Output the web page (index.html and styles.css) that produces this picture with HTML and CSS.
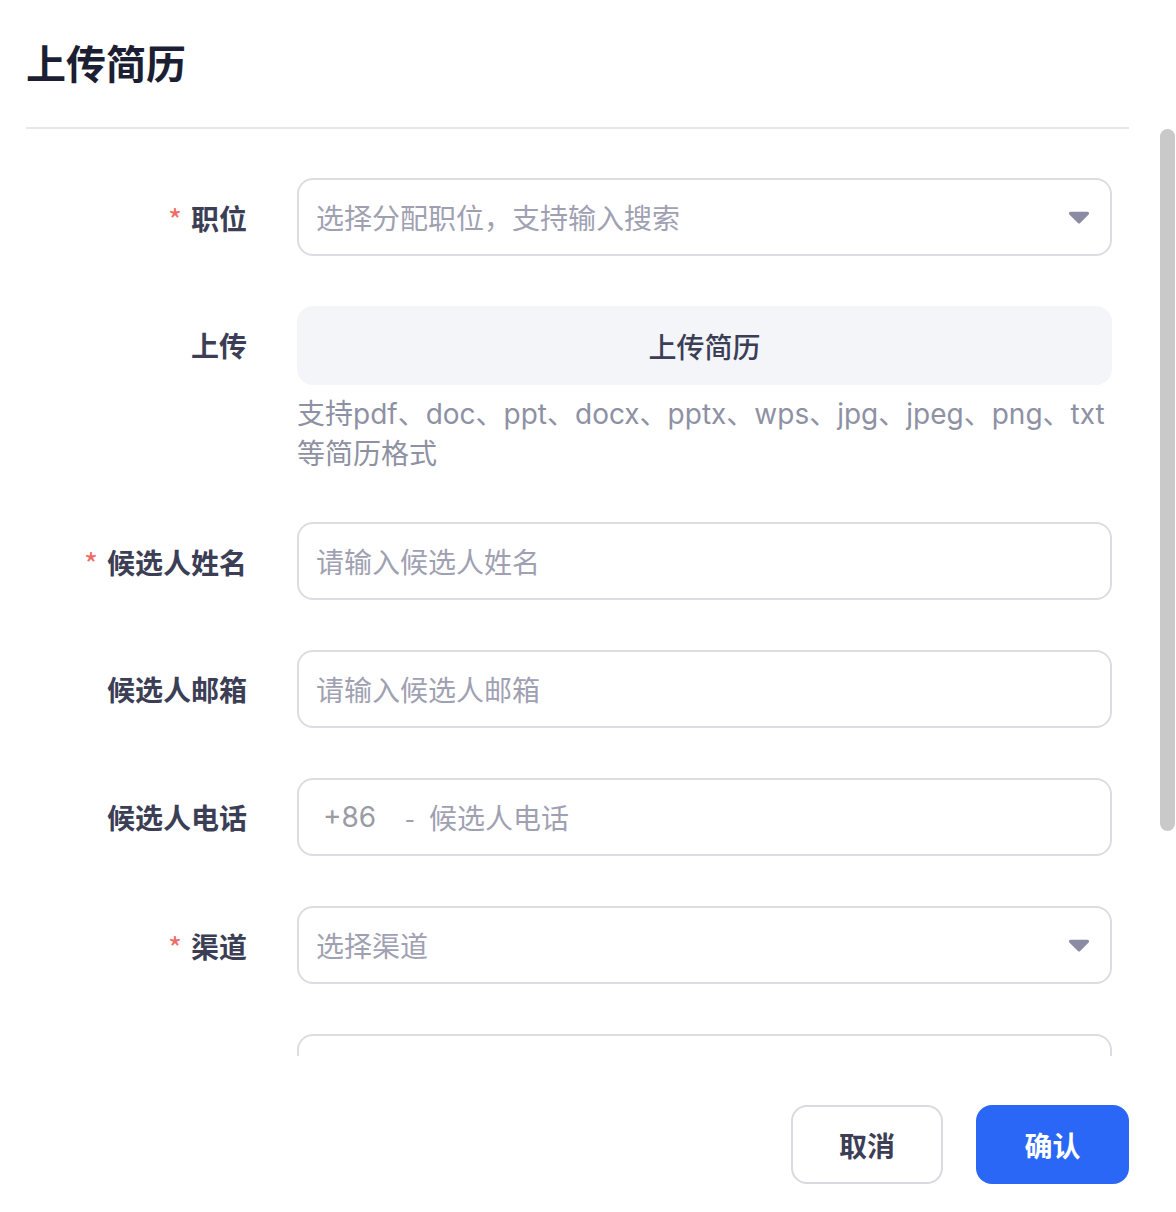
FILE: index.html
```html
<!DOCTYPE html>
<html lang="zh-CN">
<head>
<meta charset="utf-8">
<title>上传简历</title>
<link rel="stylesheet" href="styles.css">
</head>
<body>
<div class="dialog">
  <div class="header">
    <h1 class="title">上传简历</h1>
  </div>
  <div class="body">
    <div class="scroll">
      <div class="form">
        <div class="label"><span class="req">*</span>职位</div>
        <div class="field select">
          <span class="ph">选择分配职位，支持输入搜索</span>
          <svg class="arrow" width="22" height="13" viewBox="0 0 22 13"><path d="M2.6 0.8h16.8a1.6 1.6 0 0 1 1.2 2.7l-8.4 8.4a1.6 1.6 0 0 1-2.3 0L1.4 3.5A1.6 1.6 0 0 1 2.6 0.8z"/></svg>
        </div>

        <div class="label">上传</div>
        <div class="upload-col">
          <div class="upload-btn">上传简历</div>
          <p class="hint">支持pdf、doc、ppt、docx、pptx、wps、jpg、jpeg、png、txt等简历格式</p>
        </div>

        <div class="label"><span class="req">*</span>候选人姓名</div>
        <div class="field"><span class="ph">请输入候选人姓名</span></div>

        <div class="label">候选人邮箱</div>
        <div class="field"><span class="ph">请输入候选人邮箱</span></div>

        <div class="label">候选人电话</div>
        <div class="field phone"><span class="prefix">+86</span><span class="ph dash">- 候选人电话</span></div>

        <div class="label"><span class="req">*</span>渠道</div>
        <div class="field select">
          <span class="ph">选择渠道</span>
          <svg class="arrow" width="22" height="13" viewBox="0 0 22 13"><path d="M2.6 0.8h16.8a1.6 1.6 0 0 1 1.2 2.7l-8.4 8.4a1.6 1.6 0 0 1-2.3 0L1.4 3.5A1.6 1.6 0 0 1 2.6 0.8z"/></svg>
        </div>

        <div class="label"></div>
        <div class="field"></div>
      </div>
    </div>
    <div class="track"><div class="thumb"></div></div>
  </div>
  <div class="footer">
    <button class="btn cancel">取消</button>
    <button class="btn ok">确认</button>
  </div>

  <div class="watermark" aria-hidden="true">
    <span class="wm">石头 2023-10-23 15:23<br>6804436893</span>
    <span class="wm">石头 2023-10-23 15:23<br>6804436893</span>
    <span class="wm">石头 2023-10-23 15:23<br>6804436893</span>
    <span class="wm">石头 2023-10-23 15:23<br>6804436893</span>
    <span class="wm">石头 2023-10-23 15:23<br>6804436893</span>
    <span class="wm">石头 2023-10-23 15:23<br>6804436893</span>
    <span class="wm">石头 2023-10-23 15:23<br>6804436893</span>
    <span class="wm">石头 2023-10-23 15:23<br>6804436893</span>
    <span class="wm">石头 2023-10-23 15:23<br>6804436893</span>
    <span class="wm">石头 2023-10-23 15:23<br>6804436893</span>
    <span class="wm">石头 2023-10-23 15:23<br>6804436893</span>
    <span class="wm">石头 2023-10-23 15:23<br>6804436893</span>
    <span class="wm">石头 2023-10-23 15:23<br>6804436893</span>
    <span class="wm">石头 2023-10-23 15:23<br>6804436893</span>
    <span class="wm">石头 2023-10-23 15:23<br>6804436893</span>
    <span class="wm">石头 2023-10-23 15:23<br>6804436893</span>
    <span class="wm">石头 2023-10-23 15:23<br>6804436893</span>
    <span class="wm">石头 2023-10-23 15:23<br>6804436893</span>
  </div>
</div>
</body>
</html>
```

FILE: styles.css
```css
* { box-sizing: border-box; }
html, body {
  margin: 0;
  padding: 0;
  background: #ffffff;
}
body {
  font-family: Inter, "Noto Sans CJK SC", sans-serif;
  color: #3b3e55;
  width: 1176px;
  height: 1212px;
  overflow: hidden;
}
.dialog {
  position: relative;
  width: 1176px;
  height: 1212px;
  overflow: hidden;
}
.header {
  margin: 0 47px 0 26px;
  height: 129px;
  padding-top: 34px;
  border-bottom: 2px solid #e6e7ec;
}
.title {
  margin: 0;
  font-family: "Noto Sans CJK SC", sans-serif;
  font-size: 40px;
  line-height: 56px;
  font-weight: 700;
  color: #1c1f33;
}
.body {
  display: flex;
  height: 927px;
}
.scroll {
  flex: 0 0 1112px;
  overflow: hidden;
  padding: 49px 0 0 26px;
}
.form {
  display: grid;
  grid-template-columns: 221px 815px;
  column-gap: 50px;
  row-gap: 50px;
  align-items: start;
}
.label {
  height: 78px;
  line-height: 78px;
  text-align: right;
  font-family: "Noto Sans CJK SC", sans-serif;
  font-size: 28px;
  font-weight: 700;
  color: #3b3e55;
  white-space: nowrap;
}
.req {
  color: #ee6b66;
  font-family: "Noto Sans CJK SC", sans-serif;
  font-weight: 400;
  font-size: 30px;
  margin-right: 9px;
  position: relative;
  top: 2px;
}
.field {
  height: 78px;
  border: 2px solid #dcdde3;
  border-radius: 16px;
  display: flex;
  align-items: center;
  padding: 0 20px 0 17px;
  font-family: "Noto Sans CJK SC", sans-serif;
  font-size: 28px;
  background: #fff;
}
.ph {
  color: #9fa1b2;
  flex: 1;
  white-space: nowrap;
}
.arrow {
  fill: #8a8ca3;
  flex: none;
}
.phone { padding-left: 24px; }
.prefix {
  font-family: Inter, "Noto Sans CJK SC", sans-serif;
  color: #9a9ba4;
  width: 82px;
  flex: none;
}
.dash { word-spacing: 8px; }
.upload-col {
  display: flex;
  flex-direction: column;
}
.upload-btn {
  height: 79px;
  border-radius: 16px;
  background: #f4f5f9;
  display: flex;
  align-items: center;
  justify-content: center;
  font-family: "Noto Sans CJK SC", sans-serif;
  font-size: 28px;
  font-weight: 500;
  color: #3b3e55;
}
.hint {
  margin: 9px 0 -2px 0;
  font-size: 28px;
  line-height: 40px;
  color: #8e91a3;
}
.track {
  margin-left: 48px;
  width: 15px;
}
.thumb {
  width: 15px;
  height: 702px;
  border-radius: 8px;
  background: #c9c9c9;
}
.footer {
  display: flex;
  justify-content: flex-end;
  gap: 33px;
  margin-right: 47px;
  padding-top: 49px;
}
.btn {
  height: 79px;
  border-radius: 16px;
  font-family: "Noto Sans CJK SC", sans-serif;
  font-size: 28px;
  font-weight: 700;
  cursor: pointer;
  padding: 0;
}
.cancel {
  width: 152px;
  background: #fff;
  border: 2px solid #d9dae0;
  color: #3b3e55;
}
.ok {
  width: 153px;
  background: #2b67f6;
  border: none;
  color: #ffffff;
}
.watermark {
  position: absolute;
  left: 0;
  top: 0;
  width: 1176px;
  height: 1212px;
  display: grid;
  grid-template-columns: repeat(3, 392px);
  grid-template-rows: repeat(6, 202px);
  pointer-events: none;
  z-index: 5;
}
.wm {
  align-self: center;
  justify-self: center;
  display: block;
  transform: rotate(-30deg);
  font-family: Inter, "Noto Sans CJK SC", sans-serif;
  font-size: 24px;
  line-height: 32px;
  color: rgba(0, 0, 0, 0.022);
  text-align: center;
  white-space: nowrap;
}
```
